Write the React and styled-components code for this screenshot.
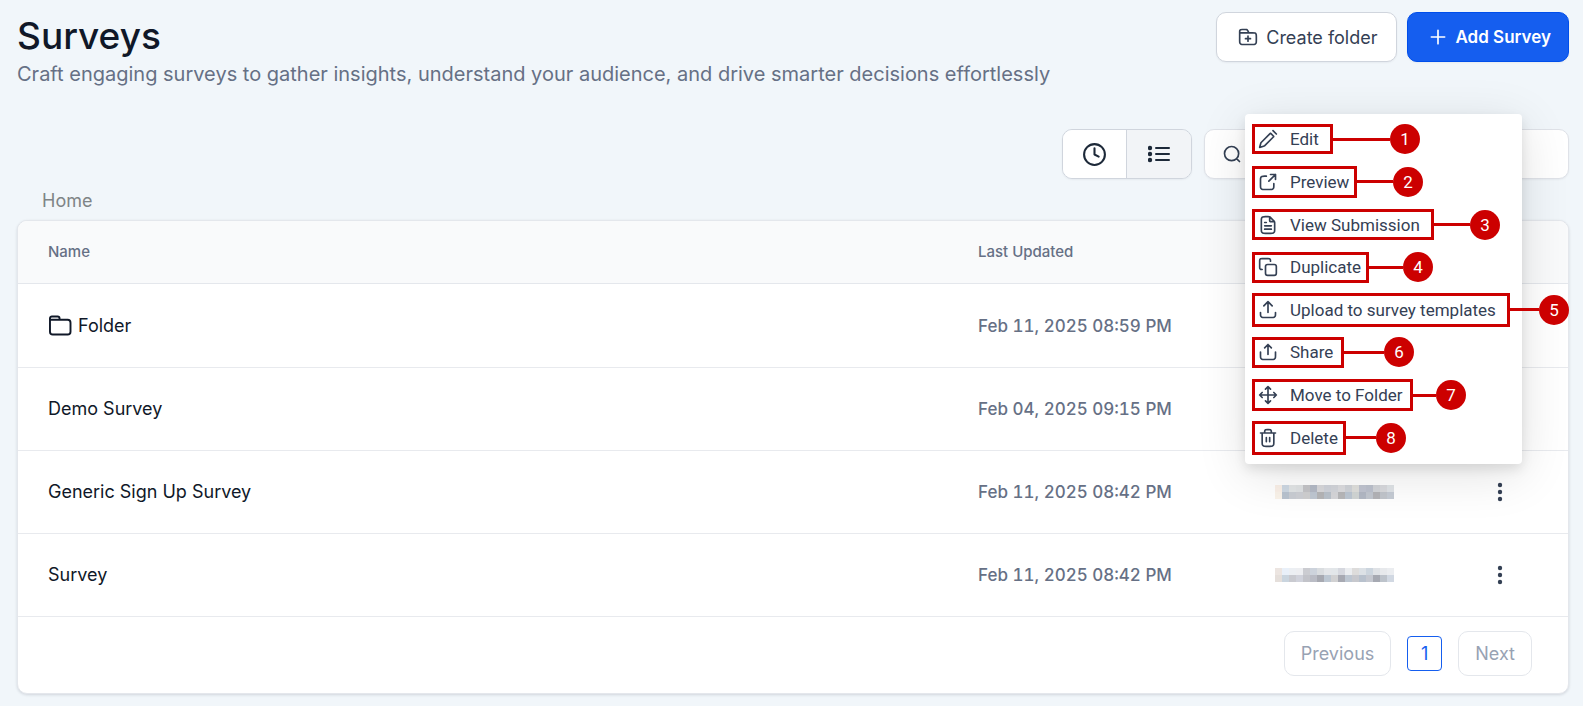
import { useState } from "react";
import styled, { createGlobalStyle, css } from "styled-components";

const GlobalStyle = createGlobalStyle`
  *, *::before, *::after {
    box-sizing: border-box;
  }

  body {
    margin: 0;
    background: #f1f6fa;
    color: #101828;
    font-family: "Inter", "Liberation Sans", sans-serif;
  }

  button, input {
    font-family: inherit;
  }

  svg {
    flex: none;
  }
`;

const Page = styled.main`
  position: relative;
  padding: 12px 14px 12px 17px;
`;

const PageHeader = styled.header`
  display: flex;
  justify-content: space-between;
  align-items: flex-start;
  margin-bottom: 40px;
`;

const Title = styled.h1`
  margin: 0;
  font-size: 37px;
  font-weight: 500;
  line-height: 47px;
`;

const Subtitle = styled.p`
  margin: 0;
  color: #667085;
  font-size: 20px;
  line-height: 30px;
`;

const Actions = styled.div`
  display: flex;
  gap: 10px;
`;

const ActionButton = styled.button`
  display: flex;
  align-items: center;
  gap: 8px;
  height: 50px;
  padding: 0 18px 0 21px;
  border: 1px solid #d0d5dd;
  border-radius: 10px;
  background: #fff;
  color: #344054;
  font-size: 18px;
  font-weight: 400;
  box-shadow: 0 1px 2px rgba(16, 24, 40, 0.05);
  cursor: pointer;

  ${(props) =>
    props.$primary &&
    css`
      padding: 0 17px 0 20px;
      border-color: #004eeb;
      background: #155eef;
      color: #fff;
      font-size: 17px;
      font-weight: 600;
    `}
`;

const Toolbar = styled.div`
  display: flex;
  justify-content: flex-end;
  gap: 12px;
`;

const ViewSwitch = styled.div`
  display: flex;
  height: 50px;
  border: 1px solid #d0d5dd;
  border-radius: 10px;
  overflow: hidden;
  box-shadow: 0 1px 2px rgba(16, 24, 40, 0.05);
`;

const ViewButton = styled.button`
  display: flex;
  align-items: center;
  justify-content: center;
  width: 63px;
  padding: 0;
  border: 0;
  background: ${(props) => (props.$active ? "#f2f4f7" : "#fff")};
  color: #1d2939;
  cursor: pointer;

  & + & {
    width: 65px;
    border-left: 1px solid #d0d5dd;
  }
`;

const SearchBox = styled.label`
  display: flex;
  align-items: center;
  gap: 10px;
  width: 365px;
  height: 50px;
  padding: 0 17px;
  border: 1px solid #dfe2e8;
  border-radius: 10px;
  background: #fff;
  color: #344054;
  box-shadow: 0 1px 2px rgba(16, 24, 40, 0.05);
`;

const SearchInput = styled.input`
  flex: 1;
  min-width: 0;
  border: 0;
  outline: 0;
  background: transparent;
  font-size: 18px;
`;

const Breadcrumb = styled.nav`
  padding: 8px 25px 5px;
  line-height: 28px;
`;

const Crumb = styled.a`
  color: #7f8486;
  font-size: 18px;
  text-decoration: none;
`;

const Card = styled.section`
  border: 1px solid #e4e7ec;
  border-radius: 10px;
  background: #fff;
  overflow: hidden;
  box-shadow: 0 1px 3px rgba(16, 24, 40, 0.14);
`;

const Table = styled.table`
  width: 100%;
  border-collapse: separate;
  border-spacing: 0;
  table-layout: fixed;
`;

const HeadCell = styled.th`
  width: ${(props) => props.$width || "auto"};
  padding: 20px 30px 21px;
  border-bottom: 1px solid #e4e7ec;
  background: #f9fafb;
  color: #667085;
  font-size: 15px;
  font-weight: 500;
  line-height: 21px;
  text-align: left;
`;

const Cell = styled.td`
  padding: 31px 30px;
  border-bottom: 1px solid #e8eaee;
  color: #101828;
  font-size: 18px;
  line-height: 20px;
`;

const DateCell = styled(Cell)`
  color: #667085;
  font-size: 17px;
  font-weight: 500;
  font-variant-numeric: tabular-nums;
`;

const FolderName = styled.span`
  display: flex;
  align-items: center;
  gap: 6px;
`;

const MoreButton = styled.button`
  display: flex;
  padding: 0;
  border: 0;
  background: none;
  color: #344054;
  cursor: pointer;
`;

const Mosaic = styled.svg`
  display: block;
`;

const Pagination = styled.nav`
  display: flex;
  align-items: center;
  justify-content: flex-end;
  gap: 16px;
  padding: 14px 36px 17px;
`;

const PageButton = styled.button`
  height: 45px;
  padding: 0 16px;
  border: 1px solid #e4e7ec;
  border-radius: 10px;
  background: #fff;
  color: #98a2b3;
  font-size: 18px;
`;

const CurrentPage = styled.button`
  width: 35px;
  height: 35px;
  padding: 0;
  border: 1px solid #155eef;
  border-radius: 4px;
  background: #fff;
  color: #155eef;
  font-size: 18px;
`;

const Menu = styled.ul`
  position: absolute;
  top: 114px;
  right: 61px;
  display: grid;
  grid-auto-rows: 1fr;
  width: 277px;
  height: 350px;
  margin: 0;
  padding: 4px 7px 5px;
  border-radius: 4px;
  background: #fff;
  list-style: none;
  box-shadow:
    0 5px 12px rgba(0, 0, 0, 0.1),
    0 10px 50px rgba(0, 0, 0, 0.12);
`;

const MenuRow = styled.li`
  display: flex;
  align-items: center;
`;

const MenuButton = styled.button`
  display: flex;
  flex: none;
  align-items: center;
  gap: 12px;
  width: ${(props) => props.$width}px;
  height: ${(props) => props.$height}px;
  padding: 0 0 0 3px;
  border: 3px solid #cc0000;
  background: none;
  color: #344054;
  font-family: "Roboto", sans-serif;
  font-size: 17px;
  line-height: 24px;
  white-space: nowrap;
  cursor: pointer;
`;

const Connector = styled.span`
  flex: none;
  width: ${(props) => props.$length}px;
  height: 3px;
  background: #cc0000;
`;

const Badge = styled.span`
  flex: none;
  width: 30px;
  height: 30px;
  border-radius: 50%;
  background: #cc0000;
  color: #fff;
  font-family: "Roboto", sans-serif;
  font-size: 17px;
  line-height: 30px;
  text-align: center;
`;

const icons = {
  folder: (
    <>
      <path d="M1.5 5V3.5a2 2 0 0 1 2-2h6a2 2 0 0 1 2 2V5" />
      <path d="M1.5 5h18.5a3 3 0 0 1 3 3v9.500a3 3 0 0 1-3 3H4.500a3 3 0 0 1-3-3z" />
    </>
  ),
  folderPlus: (
    <>
      <path d="M13 7l-1.116-2.231c-.32-.642-.481-.963-.72-1.198a2 2 0 0 0-.748-.462C10.100 3 9.740 3 9.022 3H5.200c-1.120 0-1.680 0-2.108.218a2 2 0 0 0-.874.874C2 4.520 2 5.080 2 6.200V7m0 0h15.200c1.680 0 2.520 0 3.162.327a3 3 0 0 1 1.311 1.311C22 9.280 22 10.120 22 11.800v4.400c0 1.680 0 2.520-.327 3.162a3 3 0 0 1-1.311 1.311C19.720 21 18.880 21 17.200 21H6.800c-1.680 0-2.520 0-3.162-.327a3 3 0 0 1-1.311-1.311C2 18.720 2 17.880 2 16.200V7z" />
      <path d="M12 17v-6M9 14h6" />
    </>
  ),
  plus: <path d="M12 4v16M4 12h16" />,
  clock: (
    <>
      <circle cx="12" cy="12" r="10" />
      <path d="M12 6v6l4 2" />
    </>
  ),
  search: <path d="M21 21l-3.500-3.500M20 11.500a8.500 8.500 0 1 1-17 0 8.500 8.500 0 0 1 17 0z" />,
  edit: (
    <path d="M18 2l4 4M2 22l1.276-4.680c.084-.305.125-.458.190-.600.056-.127.126-.247.207-.359.092-.127.203-.238.427-.462L14.434 5.566c.198-.198.297-.297.411-.334a.500.500 0 0 1 .310 0c.114.037.213.136.411.334l2.868 2.868c.198.198.297.297.334.411a.500.500 0 0 1 0 .310c-.037.114-.136.213-.334.411L8.100 19.900c-.224.224-.336.336-.462.427a2 2 0 0 1-.359.208c-.142.063-.295.105-.600.188L2 22z" />
  ),
  preview: (
    <path d="M21 9V3h-6M21 3l-8 8M10 5H7.800c-1.680 0-2.520 0-3.162.327a3 3 0 0 0-1.311 1.311C3 7.280 3 8.120 3 9.800v6.400c0 1.680 0 2.520.327 3.162a3 3 0 0 0 1.311 1.311C5.280 21 6.120 21 7.800 21h6.400c1.680 0 2.520 0 3.162-.327a3 3 0 0 0 1.311-1.311C19 18.720 19 17.880 19 16.200V14" />
  ),
  file: (
    <>
      <path d="M14 2.270V6.400c0 .560 0 .840.109 1.054a1 1 0 0 0 .437.437C14.760 8 15.040 8 15.600 8h4.130M20 9.988V17.200c0 1.680 0 2.520-.327 3.162a3 3 0 0 1-1.311 1.311C17.720 22 16.880 22 15.200 22H8.800c-1.680 0-2.520 0-3.162-.327a3 3 0 0 1-1.311-1.311C4 19.720 4 18.880 4 17.200V6.800c0-1.680 0-2.520.327-3.162a3 3 0 0 1 1.311-1.311C6.280 2 7.120 2 8.800 2h3.212c.733 0 1.100 0 1.446.083.306.073.598.195.867.359.303.186.562.445 1.080.963l3.190 3.190c.518.518.777.777.963 1.080.164.269.286.561.359.867.083.346.083.713.083 1.446z" />
      <path d="M16 13H8M16 17H8M10 9H8" />
    </>
  ),
  copy: (
    <>
      <path d="M5 15c-.932 0-1.398 0-1.765-.152a2 2 0 0 1-1.083-1.083C2 13.398 2 12.932 2 12V5.200c0-1.120 0-1.680.218-2.108a2 2 0 0 1 .874-.874C3.520 2 4.080 2 5.200 2H12c.932 0 1.398 0 1.765.152a2 2 0 0 1 1.083 1.083C15 3.602 15 4.068 15 5" />
      <rect x="9" y="9" width="13" height="13" rx="2.500" />
    </>
  ),
  upload: (
    <path d="M21 15v1.200c0 1.680 0 2.520-.327 3.162a3 3 0 0 1-1.311 1.311C18.720 21 17.880 21 16.200 21H7.800c-1.680 0-2.520 0-3.162-.327a3 3 0 0 1-1.311-1.311C3 18.720 3 17.880 3 16.200V15M17 7l-5-5-5 5M12 2v13" />
  ),
  share: (
    <path d="M21 12v4.200c0 1.680 0 2.520-.327 3.162a3 3 0 0 1-1.311 1.311C18.720 21 17.880 21 16.200 21H7.800c-1.680 0-2.520 0-3.162-.327a3 3 0 0 1-1.311-1.311C3 18.720 3 17.880 3 16.200V12M16 7l-4-4-4 4M12 3v12" />
  ),
  move: (
    <path d="M5 9l-3 3 3 3M9 5l3-3 3 3M15 19l-3 3-3-3M19 9l3 3-3 3M2 12h20M12 2v20" />
  ),
  trash: (
    <path d="M16 6v-.800c0-1.120 0-1.680-.218-2.108a2 2 0 0 0-.874-.874C14.480 2 13.920 2 12.800 2h-1.600c-1.120 0-1.680 0-2.108.218a2 2 0 0 0-.874.874C8 3.520 8 4.080 8 5.200V6M10 11.500v5M14 11.500v5M3 6h18M19 6v11.200c0 1.680 0 2.520-.327 3.162a3 3 0 0 1-1.311 1.311C16.720 22 15.880 22 14.200 22H9.800c-1.680 0-2.520 0-3.162-.327a3 3 0 0 1-1.311-1.311C5 19.720 5 18.880 5 17.200V6" />
  ),
};

function Icon({ name, size = 20 }) {
  return (
    <svg
      width={size}
      height={size}
      viewBox="0 0 24 24"
      fill="none"
      stroke="currentColor"
      strokeWidth="2"
      strokeLinecap="round"
      strokeLinejoin="round"
      aria-hidden="true"
    >
      {icons[name]}
    </svg>
  );
}

function ListIcon() {
  return (
    <svg width="22" height="18" viewBox="0 0 22 18" fill="currentColor" aria-hidden="true">
      {[3, 9, 15].map((y) => (
        <g key={y}>
          <circle cx="2" cy={y} r="2.2" />
          <rect x="7" y={y - 1} width="15" height="2" rx="1" />
        </g>
      ))}
    </svg>
  );
}

function DotsIcon() {
  return (
    <svg width="6" height="20" viewBox="0 0 6 20" fill="currentColor" aria-hidden="true">
      <circle cx="3" cy="3" r="2.2" />
      <circle cx="3" cy="10" r="2.2" />
      <circle cx="3" cy="17" r="2.2" />
    </svg>
  );
}

// hidden owner names, two lines of 7px blocks each
const mosaics = [
  [
    "#faf0e8 #ced8e3 #e2e5e6 #dfe2e4 #c4c4c7 #b4bac6 #d8d8db #d0d3da #d3d5da #dcdcdf #d0d3d8 #dfdfdc #c0c4d0 #bcc1cd #d2d4d8 #d8d9dd #dfe3e7",
    "#faf3ea #b9c3cf #c9cdd3 #cdcfd4 #cfcfd0 #bfc7d2 #b5b5b7 #b9c1ca #d6d6d9 #b7b7b9 #bcc6d2 #d1d5d4 #b2b8c4 #c1c6cf #b3b3b7 #c1c5cb #c5cbd4",
  ],
  [
    "#ece5e1 #e9f0f9 #eceff3 #edeef1 #cbccd1 #cdd3dc #dadde0 #e4e6e9 #e2e6e9 #d6d8df #ebedf0 #dddcdb #dce1e6 #ccd5de #dfe2e6 #e7e9ec #ebedf0",
    "#e5dfdb #cad5df #c9cad0 #d0d2db #c2c3c9 #babcc5 #a7a9b1 #bdc7d2 #d1d1d2 #a7a9b2 #bdc6d1 #c7c8cd #b8c1cd #c5c8d0 #a6a9b2 #bdc3cb #d1d8e2",
  ],
];

function HiddenName({ rows }) {
  return (
    <Mosaic width="119" height="14" shapeRendering="crispEdges" aria-hidden="true">
      {rows.map((row, y) =>
        row
          .split(" ")
          .map((fill, x) => (
            <rect key={`${x}-${y}`} x={x * 7} y={y * 7} width="7" height="7" fill={fill} />
          ))
      )}
    </Mosaic>
  );
}

const surveys = [
  { name: "Folder", updated: "Feb 11, 2025 08:59 PM", folder: true },
  { name: "Demo Survey", updated: "Feb 04, 2025 09:15 PM" },
  {
    name: "Generic Sign Up Survey",
    updated: "Feb 11, 2025 08:42 PM",
    owner: mosaics[0],
  },
  { name: "Survey", updated: "Feb 11, 2025 08:42 PM", owner: mosaics[1] },
];

const menuItems = [
  { label: "Edit", icon: "edit", width: 81, height: 30, line: 57 },
  { label: "Preview", icon: "preview", width: 105, height: 32, line: 36 },
  { label: "View Submission", icon: "file", width: 182, height: 31, line: 36 },
  { label: "Duplicate", icon: "copy", width: 117, height: 31, line: 34 },
  { label: "Upload to survey templates", icon: "upload", width: 258, height: 34, line: 29 },
  { label: "Share", icon: "share", width: 92, height: 31, line: 40 },
  { label: "Move to Folder", icon: "move", width: 161, height: 32, line: 23 },
  { label: "Delete", icon: "trash", width: 94, height: 34, line: 30 },
];

function SurveyMenu() {
  return (
    <Menu>
      {menuItems.map((item, index) => (
        <MenuRow key={item.label}>
          <MenuButton $width={item.width} $height={item.height}>
            <Icon name={item.icon} />
            {item.label}
          </MenuButton>
          <Connector $length={item.line} />
          <Badge>{index + 1}</Badge>
        </MenuRow>
      ))}
    </Menu>
  );
}

function App() {
  const [view, setView] = useState("list");
  const [query, setQuery] = useState("");

  return (
    <Page>
      <GlobalStyle />
      <PageHeader>
        <div>
          <Title>Surveys</Title>
          <Subtitle>
            Craft engaging surveys to gather insights, understand your audience,
            and drive smarter decisions effortlessly
          </Subtitle>
        </div>
        <Actions>
          <ActionButton>
            <Icon name="folderPlus" />
            Create folder
          </ActionButton>
          <ActionButton $primary>
            <Icon name="plus" />
            Add Survey
          </ActionButton>
        </Actions>
      </PageHeader>

      <Toolbar>
        <ViewSwitch>
          <ViewButton
            aria-label="Recent"
            $active={view === "recent"}
            onClick={() => setView("recent")}
          >
            <Icon name="clock" size={25} />
          </ViewButton>
          <ViewButton
            aria-label="List"
            $active={view === "list"}
            onClick={() => setView("list")}
          >
            <ListIcon />
          </ViewButton>
        </ViewSwitch>
        <SearchBox>
          <Icon name="search" />
          <SearchInput
            type="search"
            aria-label="Search"
            value={query}
            onChange={(e) => setQuery(e.target.value)}
          />
        </SearchBox>
      </Toolbar>

      <Breadcrumb>
        <Crumb href="#home">Home</Crumb>
      </Breadcrumb>

      <Card>
        <Table>
          <thead>
            <tr>
              <HeadCell>Name</HeadCell>
              <HeadCell $width="297px">Last Updated</HeadCell>
              <HeadCell $width="222px" />
              <HeadCell $width="101px" />
            </tr>
          </thead>
          <tbody>
            {surveys.map((survey) => (
              <tr key={survey.name}>
                <Cell>
                  {survey.folder ? (
                    <FolderName>
                      <svg
                        width="24"
                        height="21"
                        viewBox="0 0 24 22"
                        fill="none"
                        stroke="currentColor"
                        strokeWidth="2"
                        aria-hidden="true"
                      >
                        {icons.folder}
                      </svg>
                      {survey.name}
                    </FolderName>
                  ) : (
                    survey.name
                  )}
                </Cell>
                <DateCell>{survey.updated}</DateCell>
                <Cell>{survey.owner && <HiddenName rows={survey.owner} />}</Cell>
                <Cell>
                  {survey.owner && (
                    <MoreButton aria-label={`Actions for ${survey.name}`}>
                      <DotsIcon />
                    </MoreButton>
                  )}
                </Cell>
              </tr>
            ))}
          </tbody>
        </Table>
        <Pagination>
          <PageButton>Previous</PageButton>
          <CurrentPage>1</CurrentPage>
          <PageButton>Next</PageButton>
        </Pagination>
      </Card>

      <SurveyMenu />
    </Page>
  );
}

export default App;
